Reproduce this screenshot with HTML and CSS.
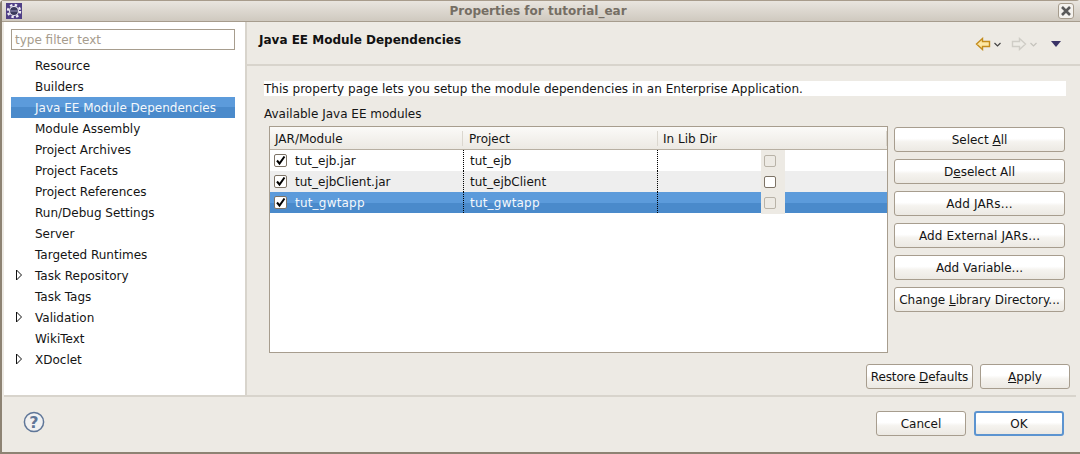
FILE: index.html
```html
<!DOCTYPE html>
<html lang="en">
<head>
<meta charset="utf-8">
<title>Properties for tutorial_ear</title>
<link rel="stylesheet" href="styles.css">
</head>
<body>
<div class="window">
  <header class="titlebar">
    <svg class="app-icon" width="16" height="16" viewBox="0 0 16 16"><rect width="16" height="16" fill="#4f3f86"/><circle cx="8" cy="8" r="6.1" fill="none" stroke="#efeef4" stroke-width="2.2" stroke-dasharray="2.4 2.39"/><circle cx="8" cy="8" r="5" fill="#efeef4"/><circle cx="8" cy="8" r="3.9" fill="#3b3a5c"/><rect x="4.4" y="7.5" width="7.2" height="1" fill="#9a94bd"/></svg>
    <div class="title">Properties for tutorial_ear</div>
    <div class="close"><svg width="12" height="12" viewBox="0 0 12 12"><path d="M2 2l8 8M10 2l-8 8" stroke="#5a5a5a" stroke-width="2.6"/></svg></div>
  </header>
  <div class="main">
    <aside class="sidebar">
      <div class="filter">type filter text</div>
      <ul class="tree">
        <li class="node">Resource</li>
        <li class="node">Builders</li>
        <li class="node selected">Java EE Module Dependencies</li>
        <li class="node">Module Assembly</li>
        <li class="node">Project Archives</li>
        <li class="node">Project Facets</li>
        <li class="node">Project References</li>
        <li class="node">Run/Debug Settings</li>
        <li class="node">Server</li>
        <li class="node">Targeted Runtimes</li>
        <li class="node"><svg class="twisty" width="8" height="12" viewBox="0 0 8 12"><path d="M1.5 1L6.5 6L1.5 11Z" fill="#fff" stroke="#111"/></svg>Task Repository</li>
        <li class="node">Task Tags</li>
        <li class="node"><svg class="twisty" width="8" height="12" viewBox="0 0 8 12"><path d="M1.5 1L6.5 6L1.5 11Z" fill="#fff" stroke="#111"/></svg>Validation</li>
        <li class="node">WikiText</li>
        <li class="node"><svg class="twisty" width="8" height="12" viewBox="0 0 8 12"><path d="M1.5 1L6.5 6L1.5 11Z" fill="#fff" stroke="#111"/></svg>XDoclet</li>
      </ul>
    </aside>
    <section class="content">
      <div class="page-head">
        <h1 class="page-title">Java EE Module Dependencies</h1>
        <div class="nav">
          <svg width="16" height="14" viewBox="0 0 16 14"><path d="M1.5 7L7.5 1.5V4.5H14.5V9.5H7.5V12.5Z" fill="#fde7a4" stroke="#c48c1c" stroke-width="1.4"/></svg>
          <svg class="chev" width="7" height="5" viewBox="0 0 7 5"><path d="M.5 1L3.5 4L6.5 1" fill="none" stroke="#444" stroke-width="1.2"/></svg>
          <svg class="nav-next" width="16" height="14" viewBox="0 0 16 14"><path d="M14.5 7L8.5 1.5V4.5H1.5V9.5H8.5V12.5Z" fill="#eeece6" stroke="#cfcdc6" stroke-width="1.4"/></svg>
          <svg class="chev" width="7" height="5" viewBox="0 0 7 5"><path d="M.5 1L3.5 4L6.5 1" fill="none" stroke="#c4c2bb" stroke-width="1.2"/></svg>
          <svg class="nav-menu" width="10" height="6" viewBox="0 0 10 6"><path d="M0 0H10L5 6Z" fill="#3a3366"/></svg>
        </div>
      </div>
      <div class="page-body">
        <p class="desc">This property page lets you setup the module dependencies in an Enterprise Application.</p>
        <div class="avail">Available Java EE modules</div>
        <div class="editor">
          <div class="table">
            <div class="thead">
              <div class="th col1">JAR/Module</div>
              <div class="th col2">Project</div>
              <div class="th col3">In Lib Dir</div>
            </div>
            <div class="tr">
              <div class="td col1"><span class="cb checked"><svg width="11" height="11" viewBox="0 0 11 11"><path d="M2 5.5L4.5 8.5L9.5 1.5" fill="none" stroke="#000" stroke-width="2"/></svg></span>tut_ejb.jar</div>
              <div class="td col2">tut_ejb</div>
              <div class="td col3"><span class="cell-check"><span class="cb small disabled"></span></span></div>
            </div>
            <div class="tr alt">
              <div class="td col1"><span class="cb checked"><svg width="11" height="11" viewBox="0 0 11 11"><path d="M2 5.5L4.5 8.5L9.5 1.5" fill="none" stroke="#000" stroke-width="2"/></svg></span>tut_ejbClient.jar</div>
              <div class="td col2">tut_ejbClient</div>
              <div class="td col3"><span class="cell-check"><span class="cb small"></span></span></div>
            </div>
            <div class="tr sel">
              <div class="td col1"><span class="cb checked"><svg width="11" height="11" viewBox="0 0 11 11"><path d="M2 5.5L4.5 8.5L9.5 1.5" fill="none" stroke="#000" stroke-width="2"/></svg></span><span class="wide">tut_gwtapp</span></div>
              <div class="td col2"><span class="wide">tut_gwtapp</span></div>
              <div class="td col3"><span class="cell-check"><span class="cb small disabled"></span></span></div>
            </div>
          </div>
          <div class="side-buttons">
            <button class="btn">Select <u>A</u>ll</button>
            <button class="btn">D<u>e</u>select All</button>
            <button class="btn btn-wide">Add JARs...</button>
            <button class="btn btn-wide">Add External JARs...</button>
            <button class="btn">Add Variable...</button>
            <button class="btn">Change <u>L</u>ibrary Directory...</button>
          </div>
        </div>
        <div class="page-actions">
          <button class="btn restore">Restore <u>D</u>efaults</button>
          <button class="btn apply"><u>A</u>pply</button>
        </div>
      </div>
    </section>
  </div>
  <footer class="footer">
    <svg class="help" width="22" height="22" viewBox="0 0 22 22"><circle cx="11" cy="11" r="9.6" fill="#f1f1f1" stroke="#5f7698" stroke-width="1.5"/><text x="11" y="16.5" text-anchor="middle" class="help-q">?</text></svg>
    <div class="footer-buttons">
      <button class="btn">Cancel</button>
      <button class="btn default">OK</button>
    </div>
  </footer>
</div>
</body>
</html>
```
FILE: styles.css
```css
* { box-sizing: border-box; }
html, body { margin: 0; padding: 0; }
body {
  width: 1080px;
  height: 454px;
  overflow: hidden;
  font-family: "DejaVu Sans", sans-serif;
  font-size: 12px;
  color: #141414;
  background: #edeae4;
}
.window {
  width: 1080px;
  height: 454px;
  display: flex;
  flex-direction: column;
  border-left: 2px solid #8d8373;
  border-top: 1px solid #a89c8c;
  border-bottom: 2px solid #8d8373;
  border-radius: 4px 4px 0 0;
}
.titlebar {
  height: 21px;
  flex: none;
  display: flex;
  align-items: center;
  padding: 0 6px 0 4px;
  background: linear-gradient(#e9e5df, #cfc9bf);
  border-bottom: 1px solid #a69c8d;
}
.app-icon { flex: none; }
.title {
  flex: 1;
  text-align: center;
  font-weight: bold;
  font-size: 12px;
  color: #756e64;
  padding-right: 4px;
}
.close {
  width: 16px;
  height: 16px;
  flex: none;
  display: flex;
  align-items: center;
  justify-content: center;
  background: #f4f2ee;
  border: 1px solid #a69c8d;
  border-radius: 3px;
}
.main {
  flex: 1;
  min-height: 0;
  display: flex;
  padding-left: 2px;
}
.sidebar {
  width: 243px;
  flex: none;
  background: #fff;
  border-right: 2px solid #d8d4cc;
  padding: 7px 10px 0 7px;
}
.filter {
  height: 21px;
  border: 1px solid #a79d8e;
  padding-left: 3px;
  line-height: 21px;
  color: #a69c8d;
  font-size: 12px;
  width: 224px;
}
.tree {
  list-style: none;
  margin: 5px 0 0;
  padding: 0;
  width: 224px;
}
.node {
  height: 21px;
  line-height: 23px;
  padding-left: 24px;
  position: relative;
  white-space: nowrap;
}
.node.selected {
  color: #f4f8fc;
  background: linear-gradient(#5c9bdb 0 50%, #4a8acb 50%);
}
.twisty {
  position: absolute;
  left: 4px;
  top: 4px;
}
.content {
  flex: 1;
  min-width: 0;
  display: flex;
  flex-direction: column;
}
.page-head {
  height: 44px;
  flex: none;
  display: flex;
  align-items: flex-start;
  justify-content: space-between;
  padding: 10px 19px 0 12px;
  border-bottom: 2px solid #d8d4cc;
}
.page-title {
  margin: 0;
  font-size: 12px;
  font-weight: bold;
  line-height: 16px;
  color: #111;
}
.nav {
  display: flex;
  align-items: center;
  padding-top: 5px;
}
.chev { margin: 0 0 0 3px; }
.nav-next { margin-left: 10px; }
.nav-menu { margin-left: 14px; }
.page-body {
  flex: 1;
  min-height: 0;
  padding: 15px 10px 0 17px;
  display: flex;
  flex-direction: column;
}
.desc {
  margin: 0;
  height: 15px;
  line-height: 16px;
  background: #fff;
  width: 802px;
  letter-spacing: .035px;
}
.avail {
  margin-top: 10px;
  height: 16px;
  line-height: 16px;
}
.editor {
  display: flex;
  margin-top: 4px;
  padding-left: 5px;
  gap: 6px;
}
.table {
  width: 619px;
  height: 227px;
  background: #fff;
  border: 1px solid #a79d8e;
  flex: none;
}
.thead {
  display: flex;
  height: 23px;
  background: linear-gradient(#fbfaf8, #ece9e3);
  border-bottom: 1px solid #b7afa2;
}
.th {
  padding-left: 5px;
  border-right: 1px solid #dbd7cf;
  margin: 4px 0;
  height: 15px;
  line-height: 17px;
}
.col1 { width: 194px; flex: none; }
.col2 { width: 194px; flex: none; }
.col3 { flex: 1; }
.th.col1 { width: 193px; }
.th.col2 { width: 195px; padding-left: 6px; }
.tr {
  display: flex;
  height: 21px;
  line-height: 23px;
}
.tr.alt { background: #eeeeee; }
.tr.sel { color: #f4f8fc; background: linear-gradient(#5c9bdb 0 50%, #4a8acb 50%); }
.td {
  display: flex;
  align-items: flex-start;
  height: 21px;
  white-space: nowrap;
}
.td.col1 { gap: 8px; padding-left: 4px; border-right: 1px dotted #000; }
.td.col2 { border-right: 1px dotted #000; padding-left: 6px; }
.td.col3 { padding-left: 103px; }
.wide { letter-spacing: .2px; }
.cb {
  display: inline-flex;
  align-items: center;
  justify-content: center;
  align-self: center;
  width: 13px;
  height: 13px;
  flex: none;
  background: #fff;
  border: 1px solid #7d7366;
  border-radius: 2px;
}
.cb.small { width: 12px; height: 12px; }
.cb.disabled { background: #edeae4; border-color: #b9b3a8; }
.cell-check {
  width: 24px;
  height: 21px;
  display: flex;
  align-items: center;
  padding-left: 3px;
  background: #edeae4;
}
.tr.sel .cell-check { height: 22px; padding-bottom: 1px; }
.side-buttons {
  display: flex;
  flex-direction: column;
  gap: 7px;
  width: 171px;
  flex: none;
  margin-top: 1px;
}
.btn {
  height: 25px;
  padding: 0;
  font-family: inherit;
  font-size: 12px;
  color: #141414;
  border: 1px solid #a79d8e;
  border-radius: 3px;
  background: linear-gradient(#ffffff 0 45%, #f5f3ef 60%, #ece9e3);
  white-space: nowrap;
}
.btn-wide { letter-spacing: .15px; }
.page-actions {
  display: flex;
  justify-content: flex-end;
  gap: 7px;
  margin-top: 11px;
}
.restore { width: 107px; letter-spacing: -.12px; }
.apply { width: 90px; }
.footer {
  height: 57px;
  flex: none;
  display: flex;
  align-items: flex-start;
  justify-content: space-between;
  margin: 0 4px 0 2px;
  padding: 14px 12px 0 19px;
  border-top: 2px solid #d8d4cc;
}
.help-q { font: bold 16px "DejaVu Sans", sans-serif; fill: #5f7698; }
.footer-buttons { display: flex; gap: 8px; }
.footer-buttons .btn { width: 90px; }
.btn.default { border: 2px solid #5c94d0; }
```
